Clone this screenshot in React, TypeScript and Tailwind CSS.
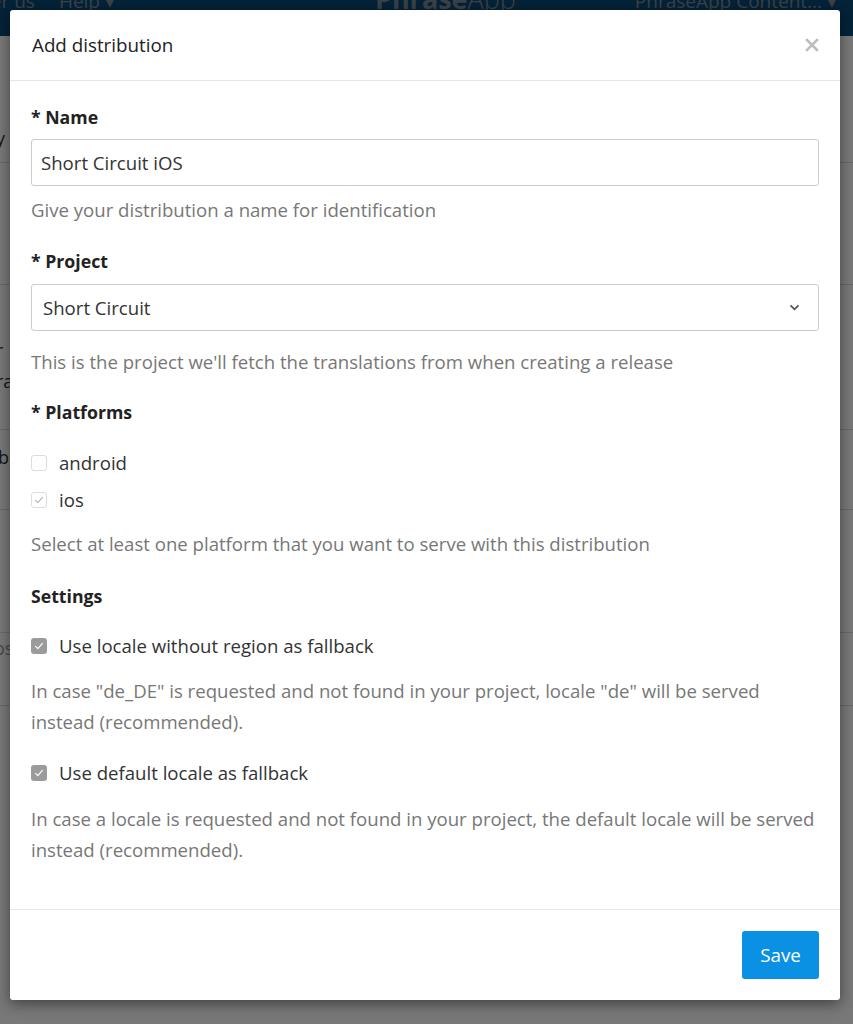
import React from "react";

const font = { fontFamily: "'Open Sans', Lato, sans-serif" };

function Check({ color }: { color: string }) {
  return (
    <svg viewBox="0 0 16 16" className="w-[12px] h-[12px]">
      <polyline points="3.5,8.5 6.5,11.5 12.5,4.5" fill="none" stroke={color} strokeWidth="1.6" strokeLinecap="round" strokeLinejoin="round" />
    </svg>
  );
}

function Box({ state }: { state: "off" | "light" | "on" }) {
  if (state === "on")
    return (
      <span className="w-[16px] h-[16px] rounded-[3px] bg-[#9b9b9b] flex items-center justify-center shrink-0">
        <Check color="#ffffff" />
      </span>
    );
  return (
    <span className="w-[16px] h-[16px] rounded-[3px] border border-[#dcdcdc] bg-white flex items-center justify-center shrink-0">
      {state === "light" ? <Check color="#b5b5b5" /> : null}
    </span>
  );
}

function Background() {
  return (
    <div className="relative w-[853px] h-[1024px] bg-white overflow-hidden">
      <div className="h-[36px] bg-[#0a4a78] flex items-start text-[#7d8a96] text-[19px] overflow-hidden">
        <div className="flex items-center w-full -mt-[17px]">
          <span className="-ml-[38px]">Refer us</span>
          <span className="ml-[24px]">Help ▾</span>
          <span className="ml-[260px] text-[27px] -mt-[4px]"><b>Phrase</b><span className="font-light">App</span></span>
          <span className="ml-auto mr-[16px]">PhraseApp Content... ▾</span>
        </div>
      </div>
      <div className="text-[#333] text-[18px]">
        <div className="h-[127px] border-b border-[#dddddd] flex items-end pb-[10px]"><span className="-ml-[4px]">y</span></div>
        <div className="h-[122px] border-b border-[#dddddd]"></div>
        <div className="h-[145px] border-b border-[#dddddd] flex flex-col justify-start pt-[50px] leading-[31px]"><span className="-ml-[4px]">r</span><span className="-ml-[4px]">ra</span></div>
        <div className="h-[80px] border-b border-[#dddddd] flex items-start pt-[14px]"><span className="-ml-[2px]">b</span></div>
        <div className="h-[123px] border-b border-[#dddddd]"></div>
        <div className="h-[73px] border-b border-[#dddddd] flex items-start pt-[2px]"><span className="-ml-[6px] text-[#999]">os</span></div>
      </div>
      <div className="absolute inset-0 bg-black/[0.53]"></div>
    </div>
  );
}

export default function App() {
  return (
    <div className="relative w-[853px] h-[1024px] overflow-hidden" style={font}>
      <Background />
      <div className="absolute left-[10px] top-[10px] w-[830px] h-[990px] bg-white rounded-[3px] shadow-[0_4px_14px_rgba(0,0,0,0.45)] flex flex-col">
        <div className="h-[71px] border-b border-[#e5e5e5] flex items-center px-[22px]">
          <span className="text-[18.8px] text-[#222]">Add distribution</span>
          <svg viewBox="0 0 14 14" className="ml-auto -mr-[1px] w-[14px] h-[14px]">
            <path d="M2 2 L12 12 M12 2 L2 12" stroke="#bdbdbd" strokeWidth="2.6" strokeLinecap="square" />
          </svg>
        </div>
        <div className="px-[21px] flex flex-col flex-1 text-[18.6px]">
          <div className="mt-[23px] h-[26px] flex items-center font-bold text-[17.7px] text-[#222]">* Name</div>
          <div className="mt-[9px] h-[47px] border border-[#cccccc] rounded-[3px] flex items-center px-[9px] text-[#333]">Short Circuit iOS</div>
          <div className="mt-[11px] h-[26px] flex items-center text-[#777]">Give your distribution a name for identification</div>

          <div className="mt-[25px] h-[26px] flex items-center font-bold text-[17.7px] text-[#222]">* Project</div>
          <div className="mt-[10px] h-[47px] border border-[#cccccc] rounded-[3px] flex items-center pl-[11px] pr-[18px] text-[#333]">
            <span>Short Circuit</span>
            <svg viewBox="0 0 12 8" className="ml-auto w-[11px] h-[7px]">
              <polyline points="1.5,1.5 6,6 10.5,1.5" fill="none" stroke="#555" strokeWidth="2" />
            </svg>
          </div>
          <div className="mt-[18px] h-[26px] flex items-center text-[#777]">This is the project we'll fetch the translations from when creating a release</div>

          <div className="mt-[24px] h-[26px] flex items-center font-bold text-[17.7px] text-[#222]">* Platforms</div>
          <div className="mt-[25px] h-[26px] flex items-center gap-[12px] text-[#333]"><Box state="off" /><span>android</span></div>
          <div className="mt-[11px] h-[26px] flex items-center gap-[12px] text-[#333]"><Box state="light" /><span>ios</span></div>
          <div className="mt-[18px] h-[26px] flex items-center text-[#777]">Select at least one platform that you want to serve with this distribution</div>

          <div className="mt-[26px] h-[26px] flex items-center font-bold text-[17.7px] text-[#222]">Settings</div>
          <div className="mt-[24px] h-[26px] flex items-center gap-[12px] text-[#333]"><Box state="on" /><span>Use locale without region as fallback</span></div>
          <div className="mt-[16px] leading-[31px] text-[#777]">In case "de_DE" is requested and not found in your project, locale "de" will be served instead (recommended).</div>
          <div className="mt-[23px] h-[26px] flex items-center gap-[12px] text-[#333]"><Box state="on" /><span>Use default locale as fallback</span></div>
          <div className="mt-[17px] leading-[31px] text-[#777]">In case a locale is requested and not found in your project, the default locale will be served instead (recommended).</div>
        </div>
        <div className="border-t border-[#e5e5e5] h-[91px] flex items-center justify-end px-[21px]">
          <button className="h-[48px] w-[77px] rounded-[3px] bg-[#0b91e4] text-white text-[18.8px]">Save</button>
        </div>
      </div>
    </div>
  );
}
